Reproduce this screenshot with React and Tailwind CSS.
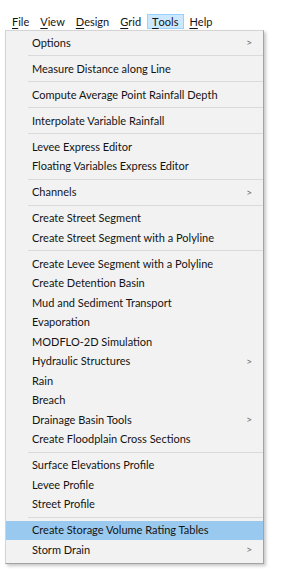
import React from 'react';

const MENUBAR = [
  { label: 'File', key: 'F', rest: 'ile' },
  { label: 'View', key: 'V', rest: 'iew' },
  { label: 'Design', key: 'D', rest: 'esign' },
  { label: 'Grid', key: 'G', rest: 'rid' },
  { label: 'Tools', key: 'T', rest: 'ools', active: true },
  { label: 'Help', key: 'H', rest: 'elp' },
];

// null = separator
const ITEMS = [
  { label: 'Options', sub: true },
  null,
  { label: 'Measure Distance along Line' },
  null,
  { label: 'Compute Average Point Rainfall Depth' },
  null,
  { label: 'Interpolate Variable Rainfall' },
  null,
  { label: 'Levee Express Editor' },
  { label: 'Floating Variables Express Editor' },
  null,
  { label: 'Channels', sub: true },
  null,
  { label: 'Create Street Segment' },
  { label: 'Create Street Segment with a Polyline' },
  null,
  { label: 'Create Levee Segment with a Polyline' },
  { label: 'Create Detention Basin' },
  { label: 'Mud and Sediment Transport' },
  { label: 'Evaporation' },
  { label: 'MODFLO-2D Simulation' },
  { label: 'Hydraulic Structures', sub: true },
  { label: 'Rain' },
  { label: 'Breach' },
  { label: 'Drainage Basin Tools', sub: true },
  { label: 'Create Floodplain Cross Sections' },
  null,
  { label: 'Surface Elevations Profile' },
  { label: 'Levee Profile' },
  { label: 'Street Profile' },
  null,
  { label: 'Create Storage Volume Rating Tables', hover: true },
  { label: 'Storm Drain', sub: true },
];

export default function App() {
  return (
    <div
      className="h-[573px] w-[283px] bg-white text-[11px] text-[#141414]"
      style={{ fontFamily: 'Lato, "Noto Sans", sans-serif' }}
    >
      <div className="flex h-[29px] items-start pl-[6.5px] pt-[14px]">
        {MENUBAR.map((m) => (
          <div
            key={m.label}
            className={`flex h-[15px] items-center px-[4.5px] leading-none ${
              m.active ? 'border border-[#99d1ff] bg-[#cce8ff]' : 'border border-transparent'
            }`}
          >
            <span className="underline decoration-[1px] underline-offset-[2px]">{m.key}</span>
            <span>{m.rest}</span>
          </div>
        ))}
      </div>
      <div className="ml-[5px] mt-px w-[259px] border border-[#d4d4d4] border-r-[#a3a3a3] border-b-[#a3a3a3] bg-[#f2f2f2] pb-[3px] pt-[2px] shadow-[2px_2px_3px_rgba(0,0,0,0.22)]">
        {ITEMS.map((it, i) =>
          it === null ? (
            <div key={i} className="ml-[22px] my-[2.75px] h-px bg-[#dadada]" />
          ) : (
            <div
              key={i}
              className={`flex h-[19.5px] items-center justify-between pl-[26px] pr-[11px] ${
                it.hover ? 'bg-[#99c9ef]' : ''
              }`}
            >
              <span>{it.label}</span>
              {it.sub && <span className="text-[10px] text-[#666]">&gt;</span>}
            </div>
          )
        )}
      </div>
    </div>
  );
}
